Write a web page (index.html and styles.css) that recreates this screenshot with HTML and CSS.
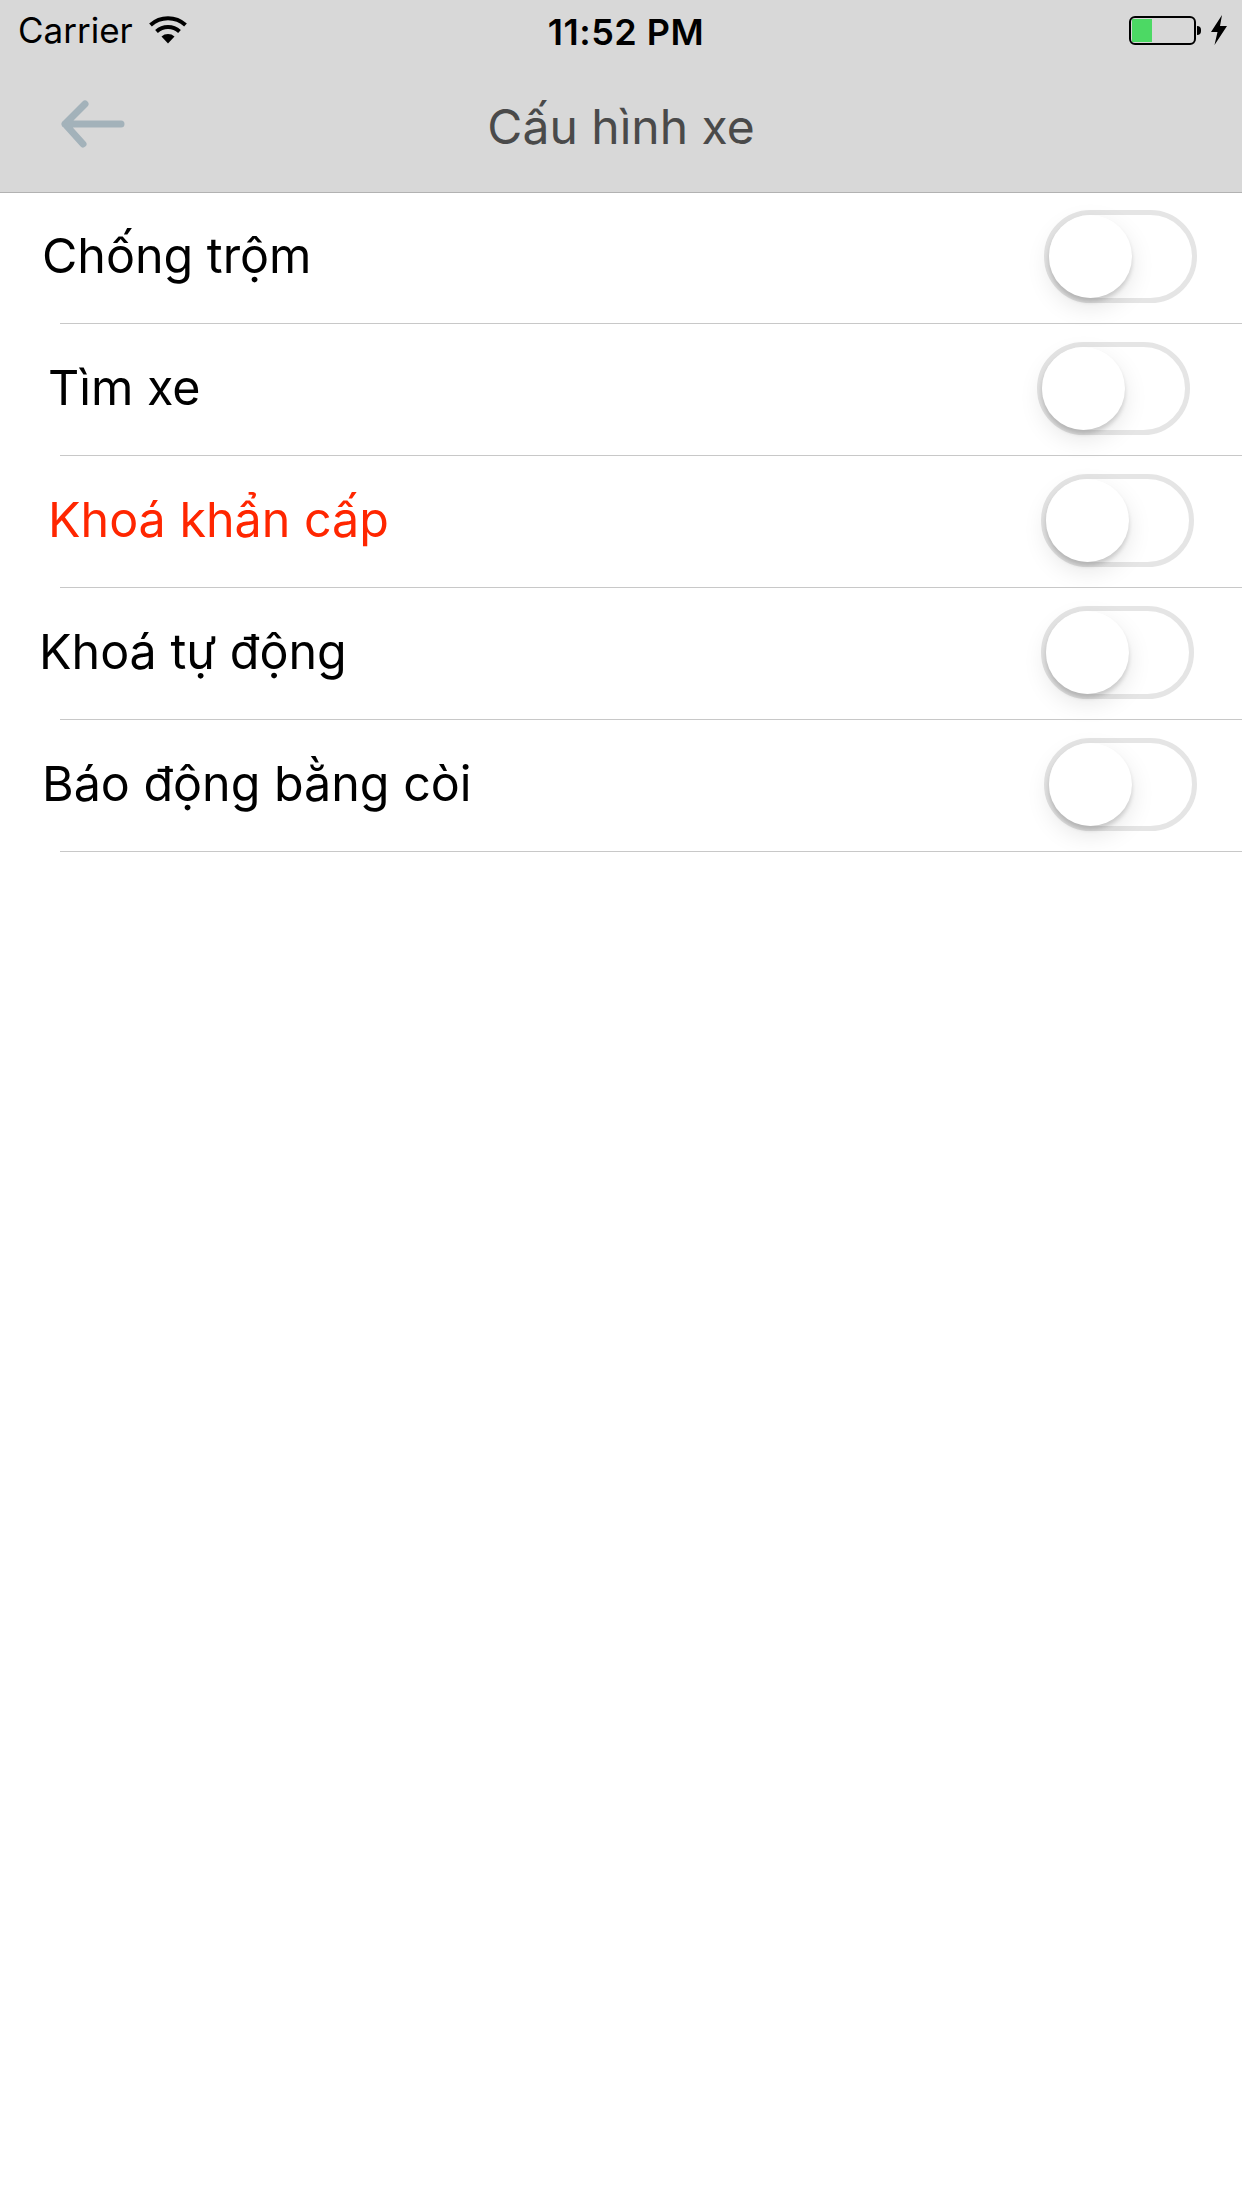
FILE: index.html
```html
<!DOCTYPE html>
<html lang="vi">
<head>
    <meta charset="UTF-8">
    <meta name="viewport" content="width=device-width, initial-scale=1.0">
    <title>Cấu hình xe</title>
    <link rel="stylesheet" href="styles.css">
</head>
<body>

    <header class="top-bar">
        <div class="status-bar">
            <div class="status-left">
                <span class="carrier">Carrier</span>
                <svg class="wifi" width="38" height="28" viewBox="0 0 38 28">
                    <path d="M1.5 9 A26 26 0 0 1 36.500 9" fill="none" stroke="#000" stroke-width="4"/>
                    <path d="M7.5 15.500 A17 17 0 0 1 30.500 15.500" fill="none" stroke="#000" stroke-width="4"/>
                    <path d="M12.500 20.500 A10 10 0 0 1 25.500 20.500 L19 27.500 Z" fill="#000"/>
                </svg>
            </div>
            <span class="clock">11:52 PM</span>
            <div class="status-right">
                <div class="battery"><div class="battery-level"></div></div>
                <div class="battery-tip"></div>
                <svg class="bolt" width="16" height="30" viewBox="0 0 16 30">
                    <path d="M11 0 L0 17 L6.500 17 L3.500 30 L16 11 L9 11 Z" fill="#000"/>
                </svg>
            </div>
        </div>
        <div class="nav-bar">
            <svg class="back" width="70" height="52" viewBox="0 0 70 52">
                <path d="M27 6 L7 26 L25 46 M7 26 L63 26" fill="none" stroke="#a3b2ba" stroke-width="7" stroke-linecap="round" stroke-linejoin="round"/>
            </svg>
            <h1>Cấu hình xe</h1>
        </div>
    </header>

    <ul class="settings">
        <li class="row row-1"><span>Chống trộm</span><div class="switch"></div></li>
        <li class="row row-2"><span>Tìm xe</span><div class="switch"></div></li>
        <li class="row row-3 danger"><span>Khoá khẩn cấp</span><div class="switch"></div></li>
        <li class="row row-4"><span>Khoá tự động</span><div class="switch"></div></li>
        <li class="row row-5"><span>Báo động bằng còi</span><div class="switch"></div></li>
    </ul>

</body>
</html>
```

FILE: styles.css
```css
body {
    font-family: 'Inter', 'Liberation Sans', sans-serif;
    background-color: #ffffff;
    margin: 0;
    padding: 0;
}
.top-bar {
    height: 192px;
    background-color: #d8d8d8;
    border-bottom: 1px solid #b2b2b2;
}
.status-bar {
    height: 60px;
    position: relative;
    display: flex;
    align-items: center;
    justify-content: space-between;
    padding: 0 15px 0 18px;
}
.status-left {
    display: flex;
    align-items: center;
    gap: 16px;
}
.carrier {
    font-size: 35px;
    color: #000;
}
.clock {
    position: absolute;
    left: 10px;
    right: 0;
    top: 10px;
    text-align: center;
    font-size: 36px;
    font-weight: 600;
    letter-spacing: 0.5px;
    color: #000;
}
.status-right {
    display: flex;
    align-items: center;
}
.battery {
    width: 67px;
    height: 29px;
    box-sizing: border-box;
    border: 2px solid #000;
    border-radius: 6px;
    padding: 1px;
}
.battery-level {
    width: 20px;
    height: 100%;
    background-color: #4cd964;
}
.battery-tip {
    width: 4px;
    height: 9px;
    margin-left: 1px;
    background-color: #000;
    border-radius: 0 5px 5px 0;
}
.bolt {
    margin-left: 10px;
}
.nav-bar {
    height: 132px;
    position: relative;
    display: flex;
    align-items: center;
    justify-content: center;
}
.nav-bar h1 {
    margin: 0;
    font-size: 48px;
    font-weight: normal;
    color: #4a4a4a;
}
.back {
    position: absolute;
    left: 58px;
    top: 38px;
}
.settings {
    list-style: none;
    margin: -1px 0 0;
    padding: 0;
}
.row {
    height: 132px;
    box-sizing: border-box;
    position: relative;
    display: flex;
    align-items: center;
    justify-content: space-between;
    font-size: 48.4px;
    color: #000;
}
.row span {
    margin-top: -3px;
}
.row::after {
    content: "";
    position: absolute;
    left: 60px;
    right: 0;
    bottom: 0;
    height: 1px;
    background-color: #c8c8c8;
}
.danger {
    color: #ff2600;
}
.row-1 { padding: 0 45px 3px 42px; }
.row-2 { padding: 0 52px 3px 48px; }
.row-3 { padding: 0 48px 3px 48px; }
.row-4 { padding: 0 48px 3px 39px; }
.row-5 { padding: 0 45px 3px 42px; }
.switch {
    width: 153px;
    height: 93px;
    box-sizing: border-box;
    border: 5px solid #e5e5e5;
    border-radius: 47px;
    position: relative;
    background-color: #fff;
}
.switch::before {
    content: "";
    position: absolute;
    left: 0;
    top: 0;
    width: 83px;
    height: 83px;
    border-radius: 50%;
    background-color: #fff;
    box-shadow: 0 4px 4px rgba(0, 0, 0, 0.15), 0 9px 24px rgba(0, 0, 0, 0.1);
}
```
